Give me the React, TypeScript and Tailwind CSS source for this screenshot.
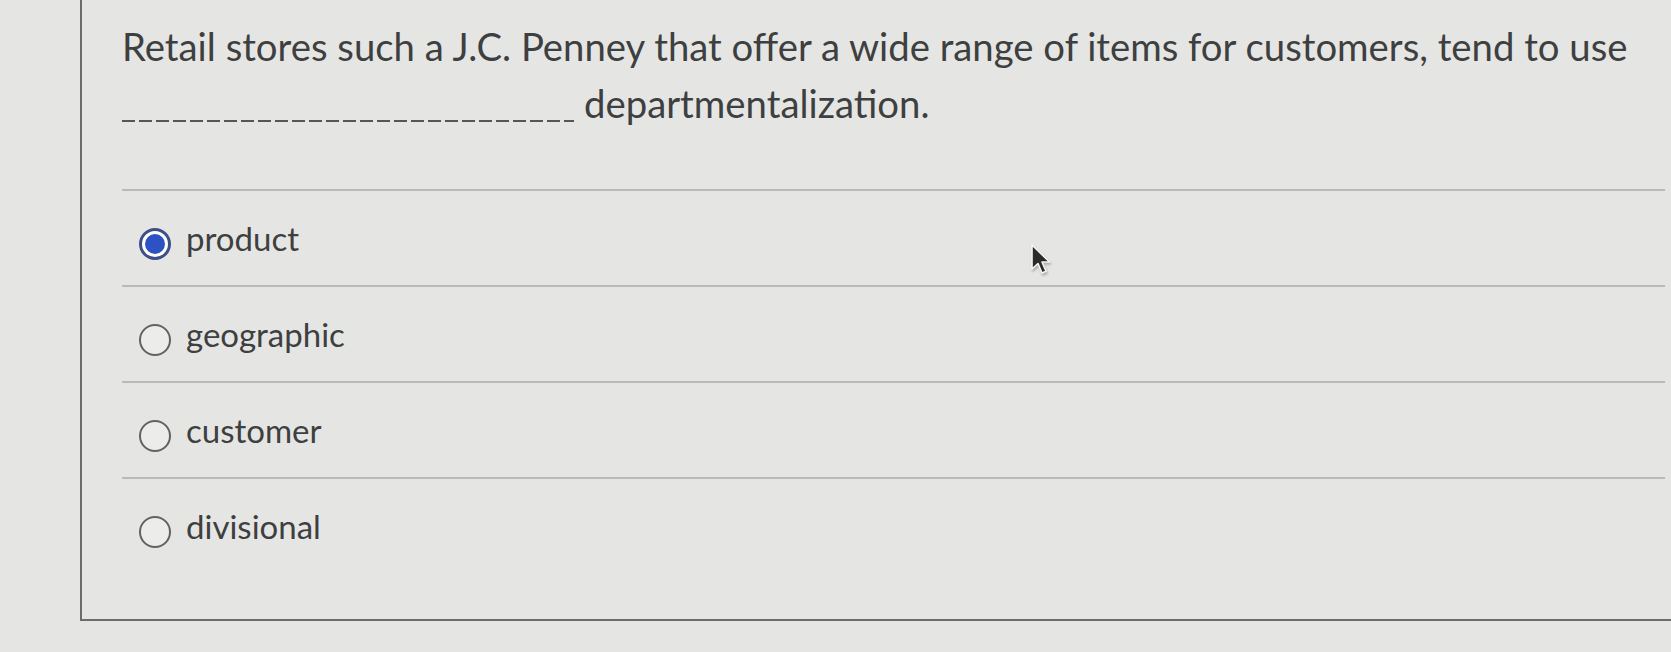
import React from 'react';

const options = [
  { label: 'product', selected: true },
  { label: 'geographic', selected: false },
  { label: 'customer', selected: false },
  { label: 'divisional', selected: false },
];

const Radio: React.FC<{ selected: boolean }> = ({ selected }) =>
  selected ? (
    <span className="mt-[10px] flex h-[32px] w-[32px] shrink-0 items-center justify-center rounded-full border-[3px] border-[#3d4f86] bg-white">
      <span className="h-[20px] w-[20px] rounded-full bg-[#2d52c4]" />
    </span>
  ) : (
    <span className="mt-[10px] h-[32px] w-[32px] shrink-0 rounded-full border-[2.5px] border-[#626262] bg-[#ecedeb]" />
  );

const App: React.FC = () => {
  return (
    <div className="relative h-[652px] w-full overflow-hidden bg-[#e5e6e4] font-['Lato','Liberation_Sans',sans-serif] text-[#3e3f40]">
      <div className="ml-[80px] h-[621px] border-b-2 border-l-2 border-[#6c6c6c] pl-[40px] pr-[6px]">
        <p className="pt-[18px] text-[38.3px] leading-[57px]">
          Retail stores such a J.C. Penney that offer a wide range of items for customers, tend to use
          <br />
          <span className="mr-[10px] inline-block h-[2px] w-[452px] align-[-4px] bg-[repeating-linear-gradient(90deg,#565656_0_13px,transparent_13px_17px)]" />
          departmentalization.
        </p>

        <div className="mt-[57px]">
          {options.map((o) => (
            <div key={o.label} className="flex h-[96px] items-start gap-[15px] border-t-2 border-[#b9bab8] pl-[17px] pt-[27px]">
              <Radio selected={o.selected} />
              <span className="text-[33px] leading-[40px]">{o.label}</span>
            </div>
          ))}
        </div>
      </div>

      {/* mouse pointer */}
      <svg className="absolute left-[1029px] top-[243px] drop-shadow-[1px_2px_1px_rgba(0,0,0,0.25)]" width="22" height="34" viewBox="0 0 22 34">
        <path d="M3 2 L3 26 L9 20.5 L13 30 L17 28.3 L13 19 L20.5 19 Z" fill="#2b2b2b" stroke="#f4f4f4" strokeWidth="1.6" strokeLinejoin="round" />
      </svg>
    </div>
  );
};

export default App;
